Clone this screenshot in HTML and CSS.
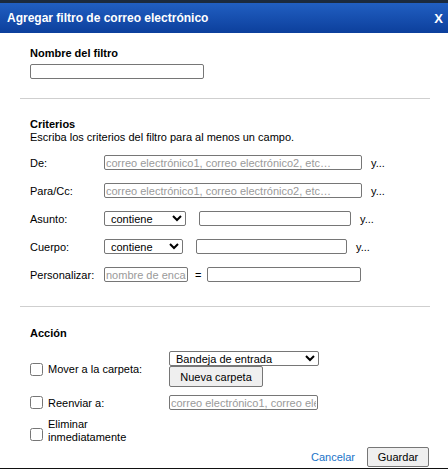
FILE: index.html
```html
<!DOCTYPE html>
<html lang="es">
<head>
<meta charset="utf-8">
<link rel="stylesheet" href="styles.css">
</head>
<body>
<div class="topstrip"></div>
<div class="dialog">
  <div class="titlebar">
    <span class="title">Agregar filtro de correo electrónico</span>
    <span class="close">X</span>
  </div>
  <div class="content">
    <section class="sec sec-name">
      <div class="h">Nombre del filtro</div>
      <input class="in name-in" type="text">
    </section>
    <hr class="sep">
    <section class="sec sec-crit">
      <div class="h">Criterios</div>
      <div class="desc">Escriba los criterios del filtro para al menos un campo.</div>
      <div class="rows">
        <div class="row">
          <label class="lbl">De:</label>
          <input class="in w-email" type="text" placeholder="correo electrónico1, correo electrónico2, etc…">
          <span class="and">y...</span>
        </div>
        <div class="row">
          <label class="lbl">Para/Cc:</label>
          <input class="in w-email" type="text" placeholder="correo electrónico1, correo electrónico2, etc…">
          <span class="and">y...</span>
        </div>
        <div class="row">
          <label class="lbl">Asunto:</label>
          <select class="sel w-sel1"><option>contiene</option></select>
          <input class="in w-subj gap-in" type="text">
          <span class="and">y...</span>
        </div>
        <div class="row">
          <label class="lbl">Cuerpo:</label>
          <select class="sel w-sel2"><option>contiene</option></select>
          <input class="in w-body gap-in" type="text">
          <span class="and">y...</span>
        </div>
        <div class="row">
          <label class="lbl">Personalizar:</label>
          <input class="in w-hdr" type="text" placeholder="nombre de encabezado">
          <span class="eq">=</span>
          <input class="in w-val" type="text">
        </div>
      </div>
    </section>
    <hr class="sep sep2">
    <section class="sec sec-act">
      <div class="h">Acción</div>
      <div class="actions">
        <div class="arow arow-move">
          <label class="chk"><input type="checkbox"><span>Mover a la carpeta:</span></label>
          <div class="folder">
            <select class="sel w-folder"><option>Bandeja de entrada</option></select>
            <button class="btn newf">Nueva carpeta</button>
          </div>
        </div>
        <div class="arow arow-fwd">
          <label class="chk"><input type="checkbox"><span>Reenviar a:</span></label>
          <input class="in w-fwd" type="text" placeholder="correo electrónico1, correo electrónico2, etc…">
        </div>
        <div class="arow arow-del">
          <label class="chk chk-del"><input type="checkbox"><span class="two">Eliminar<br>inmediatamente</span></label>
        </div>
      </div>
    </section>
    <div class="footer">
      <a class="cancel" href="#">Cancelar</a>
      <button class="btn save">Guardar</button>
    </div>
  </div>
</div>
<div class="bottomline"></div>
</body>
</html>
```
FILE: styles.css
```css
html, body {
  margin: 0;
  padding: 0;
  background: #fff;
  font-family: "Liberation Sans", Arial, sans-serif;
  font-size: 11px;
  color: #000;
}
.topstrip {
  height: 3px;
  background: #1b2a3e;
}
.dialog {
  height: 465px;
  display: flex;
  flex-direction: column;
}
.titlebar {
  height: 30px;
  background: linear-gradient(#215fc2, #0c3f9c);
  display: flex;
  align-items: center;
  justify-content: space-between;
  padding: 0 5px 0 7px;
  color: #fff;
  font-weight: bold;
}
.title {
  font-size: 12px;
}
.close {
  font-size: 13px;
}
.content {
  flex: 1;
  display: flex;
  flex-direction: column;
}
.sec {
  padding-left: 30px;
}
.h {
  font-weight: bold;
  line-height: 13px;
}
.sec-name {
  padding-top: 14px;
}
.sec-name .h {
  margin-bottom: 4px;
}
.in {
  box-sizing: border-box;
  height: 15px;
  margin: 0;
  padding: 0 1px;
  border: 1px solid #767676;
  border-radius: 2px;
  font-family: "Liberation Sans", Arial, sans-serif;
  font-size: 11px;
  background: #fff;
}
.in::placeholder {
  color: #9a9a9a;
}
.name-in {
  width: 174px;
  display: block;
}
.sep {
  margin: 19px 18px 0 20px;
  border: 0;
  border-top: 1px solid #cfcfcf;
  height: 0;
}
.sec-crit {
  padding-top: 19px;
}
.desc {
  line-height: 13px;
}
.rows {
  margin-top: 11px;
  display: flex;
  flex-direction: column;
  gap: 13px;
}
.row {
  display: flex;
  align-items: center;
  height: 15px;
}
.lbl {
  width: 74px;
  flex: none;
}
.and {
  margin-left: 9px;
}
.w-email { width: 258px; }
.sel {
  box-sizing: border-box;
  height: 15px;
  margin: 0;
  padding: 0 0 0 2px;
  border: 1px solid #767676;
  border-radius: 2px;
  font-family: "Liberation Sans", Arial, sans-serif;
  font-size: 11px;
  background: #fff;
  color: #000;
}
.w-sel1 { width: 82px; }
.w-sel2 { width: 79px; }
.w-subj { width: 152px; }
.w-body { width: 151px; }
.gap-in { margin-left: 13px; }
.w-hdr { width: 84px; }
.eq { margin: 0 6px 0 7px; }
.w-val { width: 154px; }
.sep2 {
  margin-top: 24px;
}
.sec-act {
  padding-top: 20px;
}
.actions {
  margin-top: 11px;
  display: flex;
  flex-direction: column;
}
.arow {
  display: flex;
  align-items: center;
}
.chk {
  width: 139px;
  display: flex;
  align-items: center;
  flex: none;
}
.chk input {
  margin: 0 5px 0 0;
  width: 13px;
  height: 13px;
}
.chk-del input {
  margin-top: 6px;
}
.two {
  line-height: 13px;
}
.folder {
  display: flex;
  flex-direction: column;
  align-items: flex-start;
}
.w-folder {
  width: 150px;
}
.btn {
  box-sizing: border-box;
  font-family: "Liberation Sans", Arial, sans-serif;
  font-size: 11px;
  color: #000;
  background: #efefef;
  border: 1px solid #767676;
  border-radius: 2px;
  padding: 0;
  margin: 0;
}
.newf {
  width: 94px;
  height: 21px;
}
.arow-fwd {
  margin-top: 8px;
}
.w-fwd {
  width: 149px;
}
.arow-del {
  margin-top: 8px;
}
.footer {
  margin-top: auto;
  display: flex;
  justify-content: flex-end;
  align-items: center;
  padding: 0 19px 1px 0;
}
.cancel {
  color: #1a73c8;
  text-decoration: none;
  margin-right: 12px;
}
.save {
  width: 62px;
  height: 20px;
}
.bottomline {
  height: 1px;
  background: #111;
}
```
